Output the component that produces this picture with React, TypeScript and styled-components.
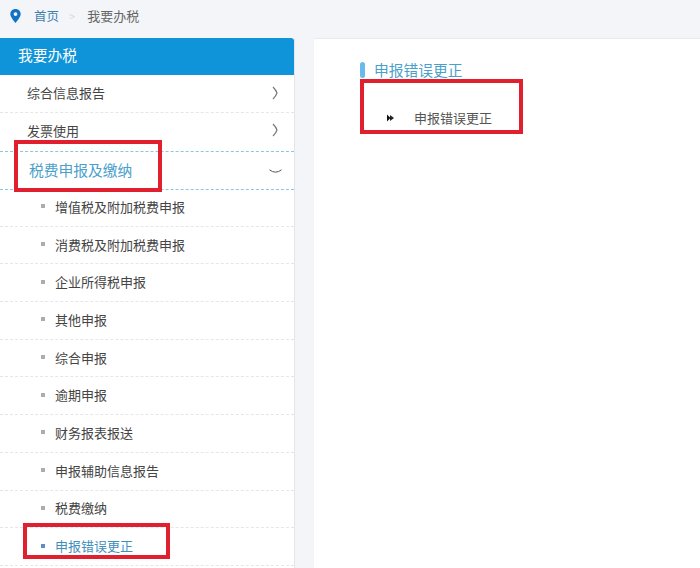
import React from 'react';
import styled, { createGlobalStyle } from 'styled-components';

const GlobalStyle = createGlobalStyle`
  html, body {
    margin: 0;
    padding: 0;
    background: #f3f5f9;
    overflow: hidden;
  }
  * {
    box-sizing: border-box;
  }
`;

const Screen = styled.div`
  position: relative;
  width: 700px;
  height: 568px;
  overflow: hidden;
  font-family: 'Noto Sans CJK SC', 'Liberation Sans', sans-serif;
  color: #4a4a4a;
`;

const Breadcrumb = styled.div`
  height: 38px;
  padding: 0 0 7px 10px;
  display: flex;
  align-items: center;
  font-size: 12.5px;
`;

const HomeLink = styled.span`
  margin-left: 13px;
  color: #3f7fb0;
`;

const Sep = styled.span`
  margin: 0 12px 0 10px;
  color: #d5d8dc;
  font-size: 11px;
`;

const Current = styled.span`
  font-size: 13px;
  color: #666;
`;

const Body = styled.div`
  display: flex;
  gap: 19px;
`;

const Sidebar = styled.div`
  width: 295px;
  height: 530px;
  background: #fff;
  border-right: 1px solid #e3e5e8;
  flex-shrink: 0;
`;

const SideHeader = styled.div`
  height: 37px;
  padding: 0 0 4px 18px;
  display: flex;
  align-items: center;
  background: #0f94d9;
  border-radius: 0 3px 0 0;
  color: #fff;
  font-size: 14.75px;
`;

const Row = styled.div<{ $active?: boolean; $height?: number }>`
  height: ${(p) => p.$height ?? 38}px;
  padding: 0 16px 2px 27px;
  display: flex;
  align-items: center;
  justify-content: space-between;
  font-size: 13px;
  color: #444;
  border-bottom: 1px dashed ${(p) => (p.$active ? '#8cc6e2' : '#e4e6e9')};
`;

const InvoiceRow = styled(Row)`
  padding-bottom: 4px;
`;

const OpenRow = styled(Row)`
  padding: 0 12px 2px 29px;
  font-size: 14.75px;
  color: #4a9fcb;
`;

const SubList = styled.div`
  margin-top: -1px;
`;

const SubRow = styled.div<{ $active?: boolean }>`
  height: 37.7px;
  padding: 0 0 2px 41px;
  display: flex;
  align-items: center;
  font-size: 13px;
  color: ${(p) => (p.$active ? '#3f8fbd' : '#444')};
  border-bottom: 1px dashed #e4e6e9;
`;

const Bullet = styled.span<{ $active?: boolean }>`
  width: 4px;
  height: 4px;
  margin-right: 10px;
  background: ${(p) => (p.$active ? '#5b8fc4' : '#a9adb0')};
`;

const Panel = styled.div`
  flex: 1;
  height: 530px;
  padding: 22px 0 0 46px;
  background: #fff;
  border-top: 1px solid #e8eaee;
`;

const PanelTitle = styled.div`
  display: flex;
  align-items: center;
  gap: 9px;
  font-size: 14.75px;
  line-height: 18px;
  color: #4a9fcb;
`;

const TitleMark = styled.span`
  width: 5px;
  height: 16px;
  border-radius: 3px;
  background: #6cb9ec;
`;

const PanelItem = styled.div`
  display: flex;
  align-items: center;
  margin: 30px 0 0 27px;
  font-size: 13px;
  line-height: 18px;
  color: #555;
`;

const ItemArrow = styled.svg`
  width: 7px;
  height: 8px;
  margin-right: 20px;
`;

const DownIcon = styled.svg`
  width: 13px;
  height: 5px;
  margin-top: 4px;
`;

const Callout = styled.div<{ $x: number; $y: number; $w: number; $h: number }>`
  position: absolute;
  left: ${(p) => p.$x}px;
  top: ${(p) => p.$y}px;
  width: ${(p) => p.$w}px;
  height: ${(p) => p.$h}px;
  border: 4px solid #e0202e;
  pointer-events: none;
`;

const ChevronRight = () => (
  <svg width="6" height="14" viewBox="0 0 6 14" fill="none">
    <path d="M1 1 Q4 4 5 7 Q4 10 1 13" stroke="#777" strokeWidth="1.2" />
  </svg>
);

const ChevronDown = () => (
  <DownIcon viewBox="0 0 13 5" fill="none">
    <path d="M0.5 0.8 Q6.5 5.5 12.5 0.8" stroke="#555" strokeWidth="1" />
  </DownIcon>
);

const subItems = [
  '增值税及附加税费申报',
  '消费税及附加税费申报',
  '企业所得税申报',
  '其他申报',
  '综合申报',
  '逾期申报',
  '财务报表报送',
  '申报辅助信息报告',
  '税费缴纳',
];

const App: React.FC = () => {
  return (
    <Screen>
      <GlobalStyle />
      <Breadcrumb>
        <svg width="11" height="14" viewBox="0 0 11 14">
          <path
            fillRule="evenodd"
            d="M5.5 0C2.5 0 0.3 2.2 0.3 5.1 0.3 8.6 5.5 14 5.5 14S10.7 8.6 10.7 5.1C10.7 2.2 8.5 0 5.5 0ZM5.5 3.2A1.9 1.9 0 1 1 5.5 7 1.9 1.9 0 0 1 5.5 3.2Z"
            fill="#1272c4"
          />
        </svg>
        <HomeLink>首页</HomeLink>
        <Sep>&gt;</Sep>
        <Current>我要办税</Current>
      </Breadcrumb>
      <Body>
        <Sidebar>
          <SideHeader>我要办税</SideHeader>
          <Row>
            综合信息报告
            <ChevronRight />
          </Row>
          <InvoiceRow $active $height={39}>
            发票使用
            <ChevronRight />
          </InvoiceRow>
          <OpenRow $active>
            税费申报及缴纳
            <ChevronDown />
          </OpenRow>
          <SubList>
            {subItems.map((item) => (
              <SubRow key={item}>
                <Bullet />
                {item}
              </SubRow>
            ))}
            <SubRow $active>
              <Bullet $active />
              申报错误更正
            </SubRow>
          </SubList>
        </Sidebar>
        <Panel>
          <PanelTitle>
            <TitleMark />
            申报错误更正
          </PanelTitle>
          <PanelItem>
            <ItemArrow viewBox="0 0 7 8">
              <path d="M0 0.5L3.5 4 0 7.5Z" fill="#111" />
              <path d="M3 1L7 4 3 7Z" fill="#222" />
            </ItemArrow>
            申报错误更正
          </PanelItem>
        </Panel>
      </Body>
      <Callout $x={14} $y={140} $w={148} $h={52} />
      <Callout $x={360} $y={79} $w={163} $h={55} />
      <Callout $x={23} $y={523} $w={147} $h={36} />
    </Screen>
  );
};

export default App;
